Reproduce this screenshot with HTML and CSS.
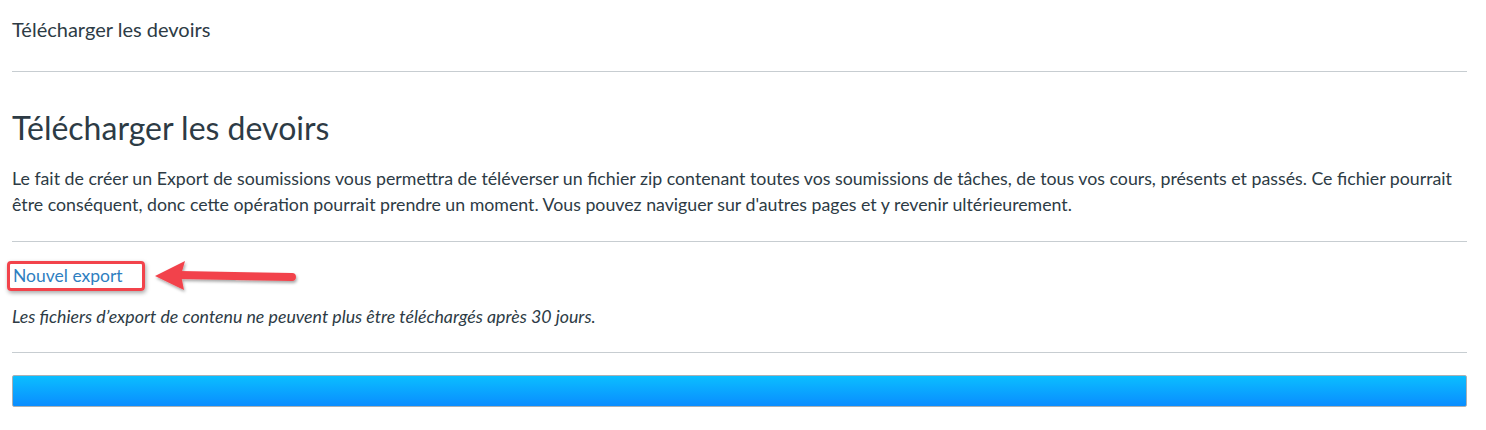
FILE: index.html
```html
<!DOCTYPE html>
<html lang="fr">
<head>
    <meta charset="UTF-8">
    <meta name="viewport" content="width=device-width, initial-scale=1.0">
    <link rel="stylesheet" href="styles.css">
    <title>Télécharger les devoirs</title>
</head>
<body>
    <!-- fil d'ariane -->
    <nav class="crumbs">Télécharger les devoirs</nav>
    <main>
        <h1>Télécharger les devoirs</h1>
        <p class="intro">Le fait de créer un Export de soumissions vous permettra de téléverser un fichier zip contenant toutes vos soumissions de tâches, de tous vos cours, présents et passés. Ce fichier pourrait être conséquent, donc cette opération pourrait prendre un moment. Vous pouvez naviguer sur d'autres pages et y revenir ultérieurement.</p>
        <div class="export-row">
            <a href="#" class="new-export">Nouvel export</a>
            <!-- fleche -->
            <svg class="arrow" width="150" height="30" viewBox="0 0 150 30">
                <defs>
                    <filter id="ombre" x="-10%" y="-30%" width="120%" height="170%">
                        <feDropShadow dx="1" dy="2" stdDeviation="1.5" flood-color="#000" flood-opacity="0.35"/>
                    </filter>
                </defs>
                <g filter="url(#ombre)">
                    <line x1="28" y1="14" x2="140" y2="16" stroke="#f2434b" stroke-width="8" stroke-linecap="round"/>
                    <polygon points="3,15 33,0 29,14 32,29" fill="#f2434b"/>
                </g>
            </svg>
        </div>
        <p class="note">Les fichiers d’export de contenu ne peuvent plus être téléchargés après 30 jours.</p>
        <div class="bar"></div>
    </main>
</body>
</html>
```

FILE: styles.css
```css
:root {
    --texte: #2d3b45;
    --lien: #2f7fc1;
    --ligne: #c7cdd1;
    --rouge: #f2434b;
}
body {
    margin: 0;
    padding: 0 19px 0 12px;
    font-family: Lato, "Noto Sans", sans-serif;
    color: var(--texte);
    background: #fff;
}
.crumbs {
    font-size: 20px;
    line-height: 24px;
    padding: 17px 0 30px;
    border-bottom: 1px solid var(--ligne);
}
h1 {
    font-size: 32px;
    font-weight: 400;
    line-height: 38px;
    margin: 37px 0 18px;
}
.intro {
    font-size: 17.75px;
    line-height: 26px;
    margin: 0;
    padding-bottom: 24px;
    border-bottom: 1px solid var(--ligne);
}
.export-row {
    display: flex;
    align-items: center;
    margin-top: 19px;
}
.new-export {
    color: var(--lien);
    text-decoration: none;
    font-size: 17.5px;
    line-height: 24px;
    padding: 0 19px 0 3px;
    margin-left: -5px;
    border: 3px solid var(--rouge);
    border-radius: 4px;
    box-shadow: 1px 2px 4px rgba(0, 0, 0, 0.35);
}
.arrow {
    margin-left: 7px;
    overflow: visible;
}
.note {
    font-size: 17.75px;
    font-style: italic;
    line-height: 22px;
    margin: 14px 0 0;
    padding-bottom: 25px;
    border-bottom: 1px solid var(--ligne);
}
.bar {
    margin-top: 22px;
    height: 30px;
    border: 1px solid #a9b0b5;
    border-radius: 2px;
    background: linear-gradient(#0bbeff, #0a8dff);
}
```
